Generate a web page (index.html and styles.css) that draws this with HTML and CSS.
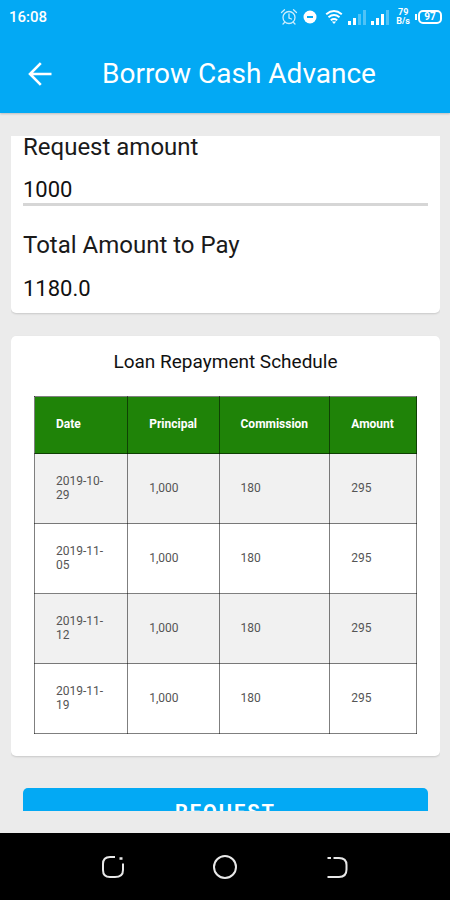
FILE: index.html
```html
<!DOCTYPE html>
<html lang="en">
<head>
<meta charset="utf-8">
<meta name="viewport" content="width=device-width, initial-scale=1">
<title>Borrow Cash Advance</title>
<link rel="stylesheet" href="styles.css">
</head>
<body>
<header class="top">
  <div class="status">
    <span class="clock">16:08</span>
    <div class="status-icons">
      <svg class="alarm" width="18" height="18" viewBox="0 0 18 18" fill="none" stroke="currentColor" stroke-width="1.3" stroke-linecap="round"><circle cx="9" cy="9.500" r="6"/><path d="M9 6v4l2.500 1M1.500 4.500l3-2.700M16.500 4.500l-3-2.700M4.500 14.500L3 16M13.500 14.500L15 16"/></svg>
      <svg width="14" height="14" viewBox="0 0 14 14"><circle cx="7" cy="7" r="6.500" fill="currentColor"/><path d="M4 7h6" stroke="#03a9f4" stroke-width="2"/></svg>
      <svg class="wifi" width="18" height="16" viewBox="0 0 18 16" fill="none" stroke="currentColor" stroke-width="2"><path d="M1.200 5.200Q9-1.200 16.800 5.200M3.500 8.200Q9 3.800 14.500 8.200M5.800 11.200Q9 8.800 12.200 11.200"/><path d="M6.800 12.500h4.400L9 15z" fill="currentColor" stroke="none"/></svg>
      <svg width="18" height="15" viewBox="0 0 18 15" fill="currentColor"><path d="M0 11h3v4H0zM5 8h3v7H5z"/><path opacity=".3" d="M10 4h3v11h-3zM15 0h3v15h-3z"/></svg>
      <svg class="signal" width="18" height="15" viewBox="0 0 18 15" fill="currentColor"><path d="M0 11h3v4H0zM5 8h3v7H5zM10 4h3v11h-3z"/><path opacity=".3" d="M15 0h3v15h-3z"/></svg>
      <span class="rate"><span>79</span><span>B/s</span></span>
      <span class="battery"><span class="level">97</span></span>
    </div>
  </div>
  <div class="appbar">
    <button class="back" type="button" aria-label="Back">
      <svg width="24" height="24" viewBox="0 0 24 24" fill="none" stroke="currentColor" stroke-width="2.600"><path d="M23.500 12H2M12.800 1.200L2 12l10.800 10.800"/></svg>
    </button>
    <h1>Borrow Cash Advance</h1>
  </div>
</header>
<main class="page">
  <form class="scroller">
    <section class="card amounts">
      <label for="amount">Request amount</label>
      <input id="amount" type="text" inputmode="numeric" value="1000">
      <label for="total">Total Amount to Pay</label>
      <output id="total">1180.0</output>
    </section>
    <section class="card schedule">
      <h2 id="schedule-title">Loan Repayment Schedule</h2>
      <table aria-labelledby="schedule-title">
        <colgroup><col class="c-date"><col class="c-principal"><col class="c-commission"><col class="c-amount"></colgroup>
        <thead><tr><th>Date</th><th>Principal</th><th>Commission</th><th>Amount</th></tr></thead>
        <tbody>
          <tr><td>2019-10-29</td><td>1,000</td><td>180</td><td>295</td></tr>
          <tr><td>2019-11-05</td><td>1,000</td><td>180</td><td>295</td></tr>
          <tr><td>2019-11-12</td><td>1,000</td><td>180</td><td>295</td></tr>
          <tr><td>2019-11-19</td><td>1,000</td><td>180</td><td>295</td></tr>
        </tbody>
      </table>
    </section>
    <button class="request" type="button">REQUEST</button>
  </form>
</main>
<nav class="navbar">
  <button type="button" aria-label="Recent apps"><svg width="24" height="24" viewBox="0 0 24 24" fill="none" stroke="currentColor" stroke-width="2"><path d="M14 2H9Q2 2 2 9v6q0 7 7 7h5q8 0 8-7V8.500"/><path d="M18.500 3.500h3" stroke-width="2.500"/></svg></button>
  <button type="button" aria-label="Home"><svg width="24" height="24" viewBox="0 0 24 24" fill="none" stroke="currentColor" stroke-width="2"><circle cx="12" cy="12" r="11"/></svg></button>
  <button type="button" aria-label="Go back"><svg width="24" height="24" viewBox="0 0 24 24" fill="none" stroke="currentColor" stroke-width="2"><path d="M8.500 3H14q7.500 0 7.500 7v4.500q0 7.500-7.500 7.500H2.500M2.500 3h3.500"/></svg></button>
</nav>
</body>
</html>
```
FILE: styles.css
```css
* {
  box-sizing: border-box;
}

body {
  margin: 0;
  height: 100vh;
  display: flex;
  flex-direction: column;
  background: #ebebeb;
  color: #1a1a1a;
  font-family: Roboto, "Liberation Sans", sans-serif;
}

button {
  border: 0;
  padding: 0;
  background: none;
  color: inherit;
  font: inherit;
}

svg {
  display: block;
}

h1,
h2 {
  margin: 0;
  font-weight: 400;
}

.top {
  background: #03a9f4;
  color: #fff;
  box-shadow: 0 1px 2px rgba(0, 0, 0, 0.2);
}

.status {
  display: flex;
  align-items: center;
  justify-content: space-between;
  height: 34px;
  padding: 0 8px 0 9px;
}

.clock {
  font-size: 15px;
  font-weight: 500;
}

.status-icons {
  display: flex;
  align-items: center;
  gap: 5px;
}

.alarm {
  opacity: 0.8;
}

.wifi {
  margin: 0 0 0 3px;
}

.rate {
  display: flex;
  flex-direction: column;
  align-items: center;
  margin-left: 2px;
  font-size: 9px;
  font-weight: 700;
  line-height: 9px;
}

.battery {
  display: flex;
  align-items: center;
}

.battery::before {
  content: "";
  width: 2px;
  height: 6px;
  margin-right: 1px;
  background: #fff;
}

.level {
  width: 24px;
  border: 2px solid #fff;
  border-radius: 5px;
  font-size: 10px;
  font-weight: 700;
  line-height: 10px;
  text-align: center;
}

.appbar {
  display: flex;
  align-items: center;
  height: 79px;
  padding: 0 28px;
  gap: 50px;
}

.appbar h1 {
  font-size: 28px;
}

.page {
  flex: 1;
  min-height: 0;
  padding: 23px 10px 22px 11px;
}

.scroller {
  display: flex;
  flex-direction: column;
  height: 100%;
  overflow: hidden;
}

.card {
  flex: none;
  background: #fff;
  border-radius: 5px;
  box-shadow: 0 1px 2px rgba(0, 0, 0, 0.15);
}

.amounts {
  display: flex;
  flex-direction: column;
  padding: 0 12px 10px;
  border-radius: 0 0 5px 5px;
}

.amounts label {
  font-size: 24px;
  line-height: 23px;
}

.amounts input,
.amounts output {
  padding: 0;
  border: 0;
  background: none;
  color: #111;
  font: 22px/28px Roboto, "Liberation Sans", sans-serif;
}

.amounts input {
  height: 47px;
  margin-bottom: 28px;
  padding-top: 16px;
  border-bottom: 3px solid #d6d6d6;
  border-radius: 0;
}

.amounts output {
  margin-top: 18px;
}

.schedule {
  margin: 23px 0 32px;
  padding: 14px 23px 22px;
}

.schedule h2 {
  margin-bottom: 23px;
  color: #111;
  font-size: 19px;
  line-height: 23px;
  text-align: center;
}

table {
  width: 100%;
  border-collapse: collapse;
  table-layout: fixed;
  font-size: 12px;
  line-height: 14px;
}

.c-date {
  width: 24.4%;
}

.c-principal {
  width: 23.9%;
}

.c-commission {
  width: 29%;
}

th,
td {
  padding: 20px 21px 21px;
  border: 1px solid rgba(0, 0, 0, 0.5);
  text-align: left;
}

th {
  padding-bottom: 22px;
  background: #1f8308;
  color: #fff;
  font-weight: 700;
}

td {
  color: #555;
}

tbody tr:nth-child(odd) {
  background: #f1f1f1;
}

.request {
  flex: none;
  height: 48px;
  margin: 0 12px;
  border-radius: 5px;
  background: #03a9f4;
  color: #fff;
  font-size: 20px;
  font-weight: 700;
  letter-spacing: 2px;
}

.navbar {
  display: flex;
  align-items: center;
  justify-content: center;
  gap: 88px;
  height: 67px;
  background: #000;
  color: #e8e8e8;
}
```
